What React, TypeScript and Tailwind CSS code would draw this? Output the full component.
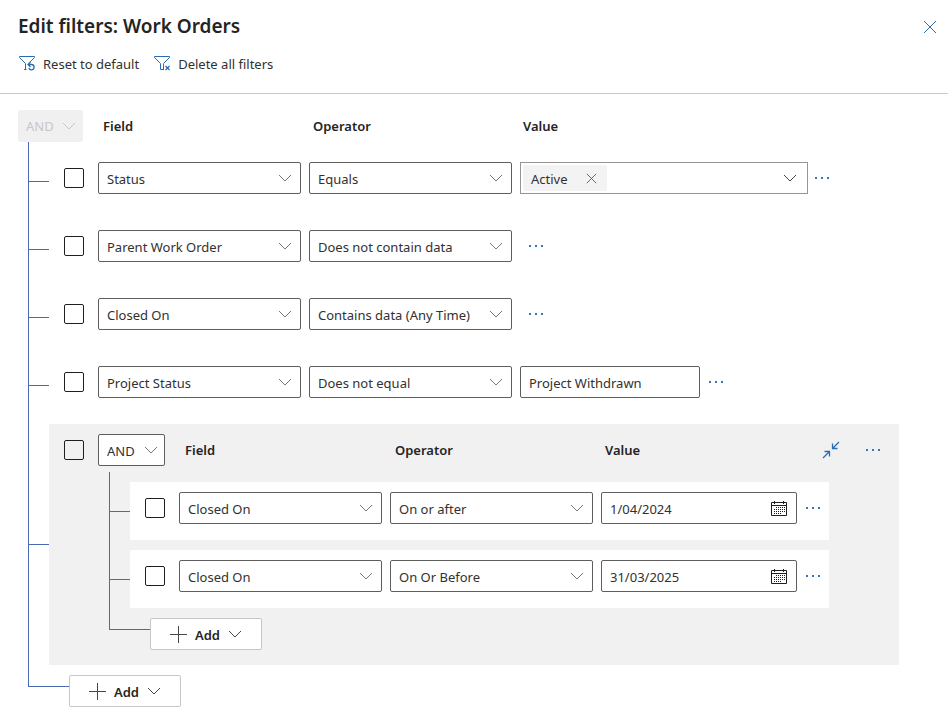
import type { ReactNode } from "react";

function Chevron({ className = "" }: { className?: string }) {
  return (
    <svg viewBox="0 0 14 8" className={`h-2 w-3.5 fill-none stroke-current ${className}`} aria-hidden="true">
      <path d="M1 1l6 6 6-6" />
    </svg>
  );
}

function Cross({ className }: { className: string }) {
  return (
    <svg viewBox="0 0 14 14" className={`fill-none stroke-current ${className}`} aria-hidden="true">
      <path d="M1 1l12 12M13 1L1 13" />
    </svg>
  );
}

function FilterReset() {
  return (
    <svg viewBox="0 0 18 18" className="size-[18px] fill-none stroke-[#2b6cb0]" aria-hidden="true">
      <path d="M6 14.500h2.500M7.500 14.500V8.500L1.500 2.500v-1h15v1L12 7" />
      <path d="M10.500 9.500h3a2.700 2.700 0 1 1-2.700 3.500M12.500 7L10 9.500l2.500 2.500" strokeWidth="1.300" />
    </svg>
  );
}

function FilterDelete() {
  return (
    <svg viewBox="0 0 18 18" className="size-[18px] fill-none stroke-[#2b6cb0]" aria-hidden="true">
      <path d="M11 14.500H7.500v-6l-6-6v-1h15v1l-6 6v6" />
      <path d="M12.500 11l4 4M16.500 11l-4 4" strokeWidth="1.300" />
    </svg>
  );
}

function Collapse() {
  return (
    <svg viewBox="0 0 18 18" className="size-[18px] fill-none stroke-[#2b6cb0] stroke-[1.300]" aria-hidden="true">
      <path d="M17 1l-6.500 6.500M10.500 2.500v5h5M1 17l6.500-6.500M2.500 10.500h5v5" />
    </svg>
  );
}

function Calendar() {
  return (
    <svg viewBox="0 0 16 16" className="size-4 fill-none stroke-[#201f1e]" aria-hidden="true">
      <path d="M.5 2.500h15v13H.5zM.5 5.500h15M3.500 1v3M12.500 1v3" />
      <path d="M5 7.500h9M3 9.500h11M3 11.500h11M3 13.500h8" strokeDasharray="1 1" />
    </svg>
  );
}

function Plus() {
  return (
    <svg viewBox="0 0 17 17" className="size-[17px] fill-none stroke-[#484644]" aria-hidden="true">
      <path d="M8.500 0v17M0 8.500h17" />
    </svg>
  );
}

function More({ narrow = false }: { narrow?: boolean }) {
  return (
    <button type="button" aria-label="More commands" className={`flex h-8 shrink-0 items-center justify-center ${narrow ? "w-7" : "w-8"}`}>
      <svg viewBox="0 0 14 2" className="h-0.5 w-3.5 fill-[#3a76ad]" aria-hidden="true">
        <path d="M0 0h2v2H0zM6 0h2v2H6zM12 0h2v2h-2z" />
      </svg>
    </button>
  );
}

function Check({ label }: { label: string }) {
  return (
    <input
      type="checkbox"
      aria-label={label}
      className="mr-3.5 size-5 shrink-0 appearance-none rounded-xs border border-[#201f1e] checked:bg-[#2b6cb0]"
    />
  );
}

function Dropdown({ label, value }: { label: string; value: string }) {
  return (
    <span className="grid w-[203px] shrink-0 items-center">
      <select
        aria-label={label}
        className="col-start-1 row-start-1 h-8 w-full appearance-none rounded-xs border border-[#605e5c] bg-white pt-0.5 pr-7 pl-2 text-[#323130]"
      >
        <option>{value}</option>
      </select>
      <Chevron className="pointer-events-none col-start-1 row-start-1 mr-[9px] justify-self-end text-[#797775]" />
    </span>
  );
}

function Conjunction({ disabled = false }: { disabled?: boolean }) {
  return (
    <span className={`grid shrink-0 items-center ${disabled ? "w-[65px] text-[#c8c6c4]" : "w-[67px] text-[#323130]"}`}>
      <select
        aria-label="Group operator"
        disabled={disabled}
        className="col-start-1 row-start-1 h-8 w-full appearance-none rounded-xs border border-[#605e5c] bg-white pt-0.5 pl-2 disabled:border-0 disabled:bg-[#f0f0f0] disabled:pt-0 disabled:opacity-100"
      >
        <option>AND</option>
        <option>OR</option>
      </select>
      <Chevron className={`pointer-events-none col-start-1 row-start-1 mr-[7px] justify-self-end ${disabled ? "" : "text-[#797775]"}`} />
    </span>
  );
}

function Headings() {
  return (
    <div className="ml-5 flex font-semibold text-[#242424]">
      <span className="w-[210px]">Field</span>
      <span className="w-[210px]">Operator</span>
      <span>Value</span>
    </div>
  );
}

function Branch({ children }: { children: ReactNode }) {
  return (
    <div className="flex border-l border-[#4a69b5]">
      <span className="mt-[39px] h-px w-5 shrink-0 bg-[#4a69b5]" />
      {children}
    </div>
  );
}

function Condition({ field, operator, children }: { field: string; operator: string; children?: ReactNode }) {
  return (
    <div className="flex items-center gap-2 pl-[15px]">
      <div className="flex items-center">
        <Check label={`Select ${field} ${operator}`} />
        <Dropdown label="Field" value={field} />
      </div>
      <Dropdown label="Operator" value={operator} />
      <div className="flex items-center">{children ?? <More />}</div>
    </div>
  );
}

function DateValue({ value }: { value: string }) {
  return (
    <>
      <div className="flex h-8 w-[196px] items-center rounded-xs border border-[#605e5c] bg-white pr-[9px] pl-2">
        <input aria-label="Date" defaultValue={value} className="min-w-0 flex-1 pt-0.5 text-[#323130]" />
        <button type="button" aria-label="Open calendar">
          <Calendar />
        </button>
      </div>
      <More />
    </>
  );
}

function AddButton() {
  return (
    <button
      type="button"
      className="flex h-8 w-28 items-center justify-center gap-2 rounded-xs border border-[#c8c6c4] bg-white font-semibold text-[#242424]"
    >
      <Plus />
      <span className="pt-0.5">Add</span>
      <Chevron className="text-[#484644]" />
    </button>
  );
}

const dates = [
  { operator: "On or after", value: "1/04/2024" },
  { operator: "On Or Before", value: "31/03/2025" },
];

export default function App() {
  return (
    <div className="min-h-screen bg-white font-['Noto_Sans','Open_Sans',sans-serif] text-[13px] leading-5 text-[#323130]">
      <header className="border-b border-[#c8c8c8] pt-3 pb-[19px] pl-[18px]">
        <div className="flex items-center justify-between pr-[11px]">
          <h1 className="text-[19px] leading-7 font-semibold text-[#242424]">Edit filters: Work Orders</h1>
          <button type="button" aria-label="Close" className="pt-0.5 text-[#2b6cb0]">
            <Cross className="size-3.5" />
          </button>
        </div>
        <div className="mt-3.5 flex gap-3.5">
          <button type="button" className="flex items-center gap-[7px]">
            <FilterReset />
            Reset to default
          </button>
          <button type="button" className="flex items-center gap-[7px]">
            <FilterDelete />
            Delete all filters
          </button>
        </div>
      </header>

      <main className="pt-4 pb-4">
        <div className="flex items-center pl-[18px]">
          <Conjunction disabled />
          <Headings />
        </div>

        <div className="ml-7">
          <Branch>
            <div className="h-[68px] pt-5">
              <Condition field="Status" operator="Equals">
                <div className="flex h-8 w-72 items-center border border-[#979593] pr-[10px] pl-0.5">
                  <span className="flex h-[26px] w-[84px] items-center justify-between rounded-xs bg-[#f3f3f3] pr-2.5 pl-2">
                    <span className="pt-0.5">Active</span>
                    <button type="button" aria-label="Remove Active" className="text-[#484644]">
                      <Cross className="size-[11px]" />
                    </button>
                  </span>
                  <button type="button" aria-label="Show values" className="flex h-full flex-1 items-center justify-end text-[#484644]">
                    <Chevron />
                  </button>
                </div>
                <More narrow />
              </Condition>
            </div>
          </Branch>
          <Branch>
            <div className="h-[68px] pt-5">
              <Condition field="Parent Work Order" operator="Does not contain data" />
            </div>
          </Branch>
          <Branch>
            <div className="h-[68px] pt-5">
              <Condition field="Closed On" operator="Contains data (Any Time)" />
            </div>
          </Branch>
          <Branch>
            <div className="h-[68px] pt-5">
              <Condition field="Project Status" operator="Does not equal">
                <input
                  aria-label="Value"
                  defaultValue="Project Withdrawn"
                  className="h-8 w-[180px] rounded-xs border border-[#605e5c] px-2 pt-0.5"
                />
                <More />
              </Condition>
            </div>
          </Branch>

          <div className="flex items-center border-l border-[#4a69b5] py-2.5">
            <span className="h-px w-5 shrink-0 bg-[#4a69b5]" />
            <section aria-label="Condition group" className="mr-[49px] flex-1 bg-[#f1f1f1] pt-2.5 pb-[15px]">
              <div className="flex items-center pr-2.5 pl-[15px]">
                <Check label="Select group" />
                <Conjunction />
                <Headings />
                <div className="ml-auto flex gap-2.5">
                  <button type="button" aria-label="Collapse group" className="flex size-8 items-center justify-center">
                    <Collapse />
                  </button>
                  <More />
                </div>
              </div>
              <div className="mt-1.5 mr-[70px] ml-[60px]">
                {dates.map((date) => (
                  <Branch key={date.value}>
                    <div className="flex-1 pt-2.5">
                      <div className="bg-white pt-2.5 pb-4">
                        <Condition field="Closed On" operator={date.operator}>
                          <DateValue value={date.value} />
                        </Condition>
                      </div>
                    </div>
                  </Branch>
                ))}
                <div className="flex">
                  <span className="h-[22px] w-[41px] border-b border-l border-[#4a69b5]" />
                  <div className="pt-2.5">
                    <AddButton />
                  </div>
                </div>
              </div>
            </section>
          </div>

          <div className="flex">
            <span className="h-3 w-[41px] border-b border-l border-[#4a69b5]" />
            <AddButton />
          </div>
        </div>
      </main>
    </div>
  );
}
